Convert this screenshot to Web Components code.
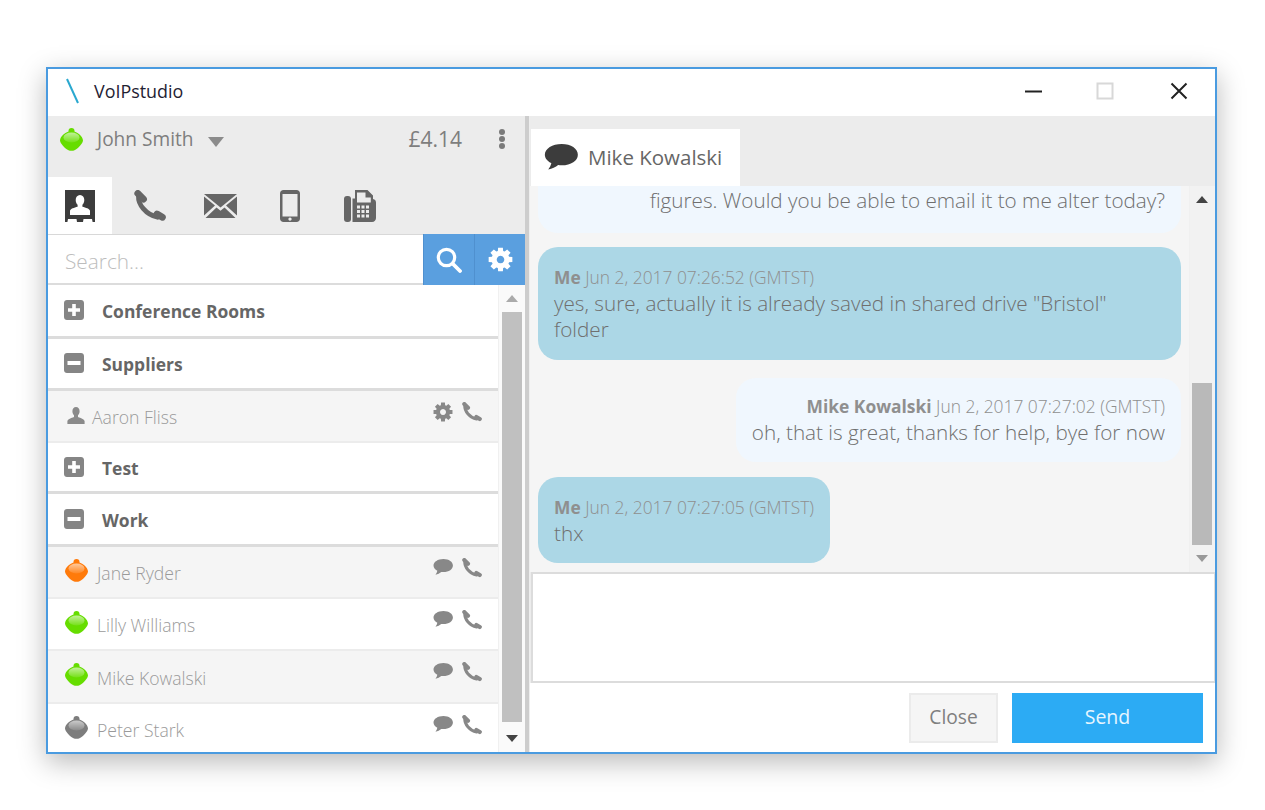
<!DOCTYPE html>
<html>
<head>
<meta charset="utf-8">
<title>VoIPstudio</title>
<style>
  html, body { margin: 0; height: 100%; background: #fff; overflow: hidden; }
  body { font-family: "Open Sans", "Liberation Sans", sans-serif; padding: 67px 48px 56px 46px; box-sizing: border-box; }
</style>
</head>
<body>
<vs-window>
  <vs-titlebar slot="north">VoIPstudio</vs-titlebar>

  <vs-panel slot="west">
    <vs-userbar slot="head" status="#66dd00" balance="£4.14">John Smith</vs-userbar>
    <vs-navtabs slot="head"></vs-navtabs>
    <vs-search slot="head"></vs-search>
    <vs-group slot="list" icon="plus" style="height:54px">Conference Rooms</vs-group>
    <vs-group slot="list" icon="minus" style="height:52px">Suppliers</vs-group>
    <vs-contact slot="list" shade action="gear" style="height:52px">Aaron Fliss</vs-contact>
    <vs-group slot="list" icon="plus" style="height:51px">Test</vs-group>
    <vs-group slot="list" icon="minus" style="height:53px">Work</vs-group>
    <vs-contact slot="list" shade status="#ff7a0a" style="height:52px">Jane Ryder</vs-contact>
    <vs-contact slot="list" status="#66dd00" style="height:52px">Lilly Williams</vs-contact>
    <vs-contact slot="list" shade status="#66dd00" style="height:53px">Mike Kowalski</vs-contact>
    <vs-contact slot="list" status="#7d7d7d" style="height:52px">Peter Stark</vs-contact>
    <vs-scrollbar slot="bar" before="27" thumb="410" track="#fafafa" tone="#c0c0c0" up="#ababab" down="#444"></vs-scrollbar>
  </vs-panel>

  <vs-conversation slot="center" who="Mike Kowalski">
    <vs-bubble slot="messages" mine-side="them" clipped style="margin-bottom:14px;--pb:20px">figures. Would you be able to email it to me alter today?</vs-bubble>
    <vs-bubble slot="messages" mine-side="me" name="Me" stamp="Jun 2, 2017 07:26:52 (GMTST)" style="margin-bottom:18px;--pb:18px">yes, sure, actually it is already saved in shared drive "Bristol" folder</vs-bubble>
    <vs-bubble slot="messages" mine-side="them" name="Mike Kowalski" stamp="Jun 2, 2017 07:27:02 (GMTST)" tight style="margin-bottom:15px">oh, that is great, thanks for help, bye for now</vs-bubble>
    <vs-bubble slot="messages" mine-side="me" name="Me" stamp="Jun 2, 2017 07:27:05 (GMTST)">thx</vs-bubble>
    <vs-scrollbar slot="bar" before="197" thumb="162" track="#f2f2f2" tone="#b9b9b9" up="#444" down="#999"></vs-scrollbar>
  </vs-conversation>
</vs-window>

<script>
// Gear with 8 teeth, generated so the same path works at any icon size.
function gearPath() {
    const pts = [];
    for (let i = 0; i < 8; i++) {
        const a = (i * Math.PI) / 4;
        const at = (r, d) => `${(12 + r * Math.cos(a + d)).toFixed(2)} ${(12 + r * Math.sin(a + d)).toFixed(2)}`;
        pts.push(at(8.6, -0.3), at(11.6, -0.2), at(11.6, 0.2), at(8.6, 0.3));
    }
    return `M${pts.join('L')}Z M12 8.4a3.6 3.6 0 1 0 .01 0Z`;
}

const PHONE = `<g fill="none" stroke="currentColor" stroke-linecap="round">
    <path d="M4.500 6.500C4 14 11.500 24.500 23.500 27.200" stroke-width="4.800"/>
    <path d="M3.800 3.400 9.500 9.200" stroke-width="6.800"/>
    <path d="M23 24 28.400 27.200" stroke-width="6.800"/></g>`;

const ICONS = {
    phone: ['0 0 32 32', PHONE],
    gear: ['0 0 24 24', `<path fill="currentColor" fill-rule="evenodd" d="${gearPath()}"/>`],
    chat: ['0 0 24 20', '<path fill="currentColor" d="M12.500 0C5.900 0 .6 3.600.6 8.200c0 2.700 1.800 5 4.600 6.500-.3 1.600-1 3.300-2.200 4.900 2.600-.5 5.300-1.900 7-3.400.8.1 1.600.2 2.500.2 6.600 0 11.400-3.600 11.400-8.200S19.100 0 12.500 0z"/>'],
    person: ['0 0 18 17', '<path fill="currentColor" d="M9 0c2.200 0 3.600 1.800 3.600 4.200 0 1.700-.7 3.200-1.600 4v1.700c2.800 1 6.200 2 6.600 4.200V17H.4v-2.900c.4-2.200 3.800-3.200 6.600-4.200V8.200c-.9-.8-1.600-2.300-1.600-4C5.400 1.800 6.800 0 9 0z"/>'],
    book: ['0 0 30 32', `<path fill="#3c3c3c" d="M0 0h30v32h-2.400l-.6-3h-8.500l-.5 3h-6l-.5-3H3l-.6 3H0z"/>
        <path fill="#fff" d="M15 5c2.700 0 4.300 2.200 4.300 5 0 2-.8 3.800-1.900 4.800v2c3.400 1 7.200 1.900 7.600 4V25H5v-4.200c.4-2.100 4.200-3 7.600-4v-2c-1.100-1-1.900-2.800-1.900-4.800 0-2.800 1.600-5 4.300-5z"/>`],
    mail: ['0 0 33 24', `<path fill="currentColor" d="M0 0h33L16.500 13.500z"/><path fill="currentColor" d="M0 2.500V21.500L11 11.500zM33 2.500V21.500L22 11.500zM1.500 24H31.500L20.500 13.500 16.500 16.800 12.500 13.500z"/>`],
    mobile: ['0 0 20 32', '<path fill="currentColor" fill-rule="evenodd" d="M3.500 0h13C18.500 0 20 1.500 20 3.500v25c0 2-1.500 3.500-3.500 3.500h-13C1.500 32 0 30.500 0 28.500v-25C0 1.500 1.500 0 3.500 0zM2.500 4v22.500h15V4zM10 27.500a1.600 1.600 0 1 0 .01 0z"/>'],
    fax: ['0 0 32 32', `<rect fill="currentColor" x="0" y="6" width="7" height="26" rx="3"/>
        <path fill="currentColor" fill-rule="evenodd" d="M8.500 8.500H11V0h12.500L29 5.500V9c1.800.3 3 1.500 3 3.500V28c0 2.200-1.500 4-4 4H8.500zM13 2.500V12.500H26.800V7.500H21.500V2.500z"/>
        <g fill="#ececec">${[13, 17.5, 22].map(x => [15.5, 20, 24.5].map(y => `<rect x="${x}" y="${y}" width="3" height="3"/>`).join('')).join('')}</g>`],
    search: ['0 0 26 26', '<g fill="none" stroke="currentColor" stroke-linecap="round"><circle cx="10.500" cy="10.500" r="8.200" stroke-width="3.200"/><path d="M17 17l7 7" stroke-width="3.800"/></g>'],
    plus: ['0 0 20 20', '<path fill="currentColor" fill-rule="evenodd" d="M3 0h14c1.700 0 3 1.300 3 3v14c0 1.700-1.300 3-3 3H3c-1.700 0-3-1.300-3-3V3c0-1.700 1.300-3 3-3zM8.200 4v4.200H4v3.600h4.200V16h3.600v-4.200H16V8.200h-4.200V4z"/>'],
    minus: ['0 0 20 20', '<path fill="currentColor" fill-rule="evenodd" d="M3 0h14c1.700 0 3 1.300 3 3v14c0 1.700-1.300 3-3 3H3c-1.700 0-3-1.300-3-3V3c0-1.700 1.300-3 3-3zM3.500 8v4h13V8z"/>'],
    dots: ['0 0 8 20', '<g fill="currentColor"><circle cx="4" cy="3" r="3"/><circle cx="4" cy="10" r="3"/><circle cx="4" cy="17" r="3"/></g>'],
};

class VsIcon extends HTMLElement {
    connectedCallback() {
        if (this._init) return;
        this._init = true;
        const [box, body] = ICONS[this.getAttribute('name')];
        const w = this.getAttribute('w');
        const h = this.getAttribute('h');
        this.attachShadow({ mode: 'open' }).innerHTML = `
            <style>:host { display: inline-flex; flex: none; width: ${w}px; height: ${h}px; } svg { width: 100%; height: 100%; display: block; }</style>
            <svg viewBox="${box}" preserveAspectRatio="none">${body}</svg>`;
    }
}

// Presence "drop": round body with a small knob on top and a lighter cap.
class VsStatus extends HTMLElement {
    connectedCallback() {
        if (this._init) return;
        this._init = true;
        const c = this.getAttribute('color');
        this.attachShadow({ mode: 'open' }).innerHTML = `
            <style>:host { display: inline-flex; flex: none; width: 23px; height: 23px; } svg { width: 100%; height: 100%; display: block; }</style>
            <svg viewBox="0 0 23 23">
                <defs><linearGradient id="cap" x1="0" y1="0" x2="0" y2="1">
                    <stop offset="0" stop-color="#fff" stop-opacity=".6"/>
                    <stop offset="1" stop-color="#fff" stop-opacity=".1"/>
                </linearGradient></defs>
                <circle fill="${c}" cx="11.500" cy="3" r="3"/>
                <path fill="${c}" d="M11.500 3C17 3 23 8.500 23 12.500 23 15 18 21 14.500 22.300 13 23 10 23 8.500 22.300 5 21 0 15 0 12.500 0 8.500 6 3 11.500 3z"/>
                <ellipse fill="url(#cap)" cx="11.500" cy="9.500" rx="8" ry="5"/>
            </svg>`;
    }
}

class VsWindow extends HTMLElement {
    connectedCallback() {
        if (this._init) return;
        this._init = true;
        this.attachShadow({ mode: 'open' }).innerHTML = `
            <style>
                :host {
                    display: grid; box-sizing: border-box; width: 1171px; height: 687px;
                    grid-template-columns: 477px 5px 1fr; grid-template-rows: 47px 1fr;
                    border: 2px solid #4a9be0; background: #fff;
                    box-shadow: 0 8px 26px rgba(0,0,0,.28);
                }
                .north { grid-column: 1 / -1; }
                .west, .center { min-height: 0; min-width: 0; }
                .split { background: #cdcdcd; border-right: 1px solid #eee; }
            </style>
            <div class="north"><slot name="north"></slot></div>
            <div class="west"><slot name="west"></slot></div>
            <div class="split"></div>
            <div class="center"><slot name="center"></slot></div>`;
    }
}

class VsTitlebar extends HTMLElement {
    connectedCallback() {
        if (this._init) return;
        this._init = true;
        this.attachShadow({ mode: 'open' }).innerHTML = `
            <style>
                :host { display: flex; align-items: center; height: 47px; box-sizing: border-box; padding-bottom: 4px; color: #1f2233; font: 400 17.900px "Open Sans", sans-serif; }
                .logo { width: 16px; height: 26px; margin: 0 14px 0 16px; }
                .title { flex: 1; }
                .ctl { width: 73px; display: flex; justify-content: center; }
                svg { display: block; }
            </style>
            <svg class="logo" viewBox="0 0 16 26"><path d="M3 1l11 24" stroke="#2aa8cf" stroke-width="2" fill="none"/></svg>
            <span class="title"><slot></slot></span>
            <span class="ctl"><svg width="17" height="18" style="margin-left:3px"><path d="M0 9.500h17" stroke="#222" stroke-width="2"/></svg></span>
            <span class="ctl"><svg width="18" height="18"><rect x="1.500" y="1.500" width="15" height="15" fill="none" stroke="#d8d8d8" stroke-width="2"/></svg></span>
            <span class="ctl" style="margin-right:1px"><svg width="18" height="18" style="margin-left:2px"><path d="M1.500 1.500l15 15M16.500 1.500l-15 15" stroke="#222" stroke-width="2"/></svg></span>`;
    }
}

class VsPanel extends HTMLElement {
    connectedCallback() {
        if (this._init) return;
        this._init = true;
        this.attachShadow({ mode: 'open' }).innerHTML = `
            <style>
                :host { display: flex; flex-direction: column; height: 636px; background: #ececec; }
                .body { flex: 1; min-height: 0; display: grid; grid-template-columns: 1fr 27px; background: #fff; }
                .list { overflow: hidden; min-height: 0; display: flex; flex-direction: column; }
            </style>
            <slot name="head"></slot>
            <div class="body">
                <div class="list"><slot name="list"></slot></div>
                <slot name="bar"></slot>
            </div>`;
    }
}

class VsUserbar extends HTMLElement {
    connectedCallback() {
        if (this._init) return;
        this._init = true;
        const s = this.getAttribute('status');
        this.attachShadow({ mode: 'open' }).innerHTML = `
            <style>
                :host { display: flex; align-items: flex-start; height: 61px; padding: 10px 19px 0 12px; box-sizing: border-box; color: #7e7e7e; font: 400 19.100px/26px "Open Sans", sans-serif; }
                vs-status { margin-top: 2px; }
                .name { margin-left: 14px; }
                .caret { width: 0; height: 0; margin: 11px 0 0 15px; border: 8px solid transparent; border-top: 10px solid #8b8b8b; border-bottom: 0; }
                .bal { margin-left: auto; font-size: 21px; }
                vs-icon { margin: 3px 0 0 36px; color: #7a7a7a; }
            </style>
            <vs-status color="${s}"></vs-status>
            <span class="name"><slot></slot></span>
            <span class="caret"></span>
            <span class="bal">${this.getAttribute('balance')}</span>
            <vs-icon name="dots" w="8" h="20"></vs-icon>`;
    }
}

class VsNavtabs extends HTMLElement {
    connectedCallback() {
        if (this._init) return;
        this._init = true;
        const tabs = [['book', 30, 32], ['phone', 32, 32], ['mail', 33, 24], ['mobile', 20, 32], ['fax', 32, 32]];
        this.attachShadow({ mode: 'open' }).innerHTML = `
            <style>
                :host { display: flex; gap: 6px; height: 57px; color: #666; }
                .tab { width: 64px; display: flex; align-items: center; justify-content: center; }
                .tab.on { background: #fff; }
            </style>
            ${tabs.map(([n, w, h], i) => `<div class="tab ${i ? '' : 'on'}"><vs-icon name="${n}" w="${w}" h="${h}"></vs-icon></div>`).join('')}`;
    }
}

class VsSearch extends HTMLElement {
    connectedCallback() {
        if (this._init) return;
        this._init = true;
        this.attachShadow({ mode: 'open' }).innerHTML = `
            <style>
                :host { display: flex; height: 51px; box-sizing: border-box; background: #fff; border-top: 1px solid #d8d8d8; border-bottom: 2px solid #dcdcdc; }
                .field { flex: 1; padding-left: 17px; color: #bdbdbd; font: 300 20.800px/52px "Open Sans", sans-serif; height: 48px; }
                .btn { width: 50px; margin: -1px 0 -2px 0; display: flex; align-items: center; justify-content: center; background: #5a9fdf; color: #fff; border-left: 1px solid #4f90cf; }
            </style>
            <div class="field">Search...</div>
            <div class="btn"><vs-icon name="search" w="26" h="26"></vs-icon></div>
            <div class="btn"><vs-icon name="gear" w="25" h="25"></vs-icon></div>`;
    }
}

class VsGroup extends HTMLElement {
    connectedCallback() {
        if (this._init) return;
        this._init = true;
        this.attachShadow({ mode: 'open' }).innerHTML = `
            <style>
                :host { display: flex; align-items: center; flex: none; box-sizing: border-box; padding: 1px 0 0 16px; background: #fff; border-bottom: 3px solid #dcdcdc; color: #666; font: 700 17.450px "Open Sans", sans-serif; }
                vs-icon { color: #858585; margin-right: 18px; margin-top: -2px; }
            </style>
            <vs-icon name="${this.getAttribute('icon')}" w="20" h="20"></vs-icon>
            <span><slot></slot></span>`;
    }
}

class VsContact extends HTMLElement {
    connectedCallback() {
        if (this._init) return;
        this._init = true;
        const status = this.getAttribute('status');
        const first = this.getAttribute('action') === 'gear'
            ? '<vs-icon name="gear" w="20" h="20"></vs-icon>'
            : '<vs-icon name="chat" w="20" h="16" style="margin-top:1px"></vs-icon>';
        const mark = status
            ? `<vs-status color="${status}"></vs-status>`
            : '<vs-icon class="person" name="person" w="18" h="17"></vs-icon>';
        this.attachShadow({ mode: 'open' }).innerHTML = `
            <style>
                :host { display: flex; align-items: center; flex: none; box-sizing: border-box; position: relative; padding: 2px 0 0 17px; background: ${this.hasAttribute('shade') ? '#f5f5f5' : '#fff'}; border-bottom: 2px solid #ececec; color: #9a9a9a; font: 300 17.600px "Open Sans", sans-serif; }
                vs-status { margin-right: 9px; margin-top: -6px; }
                .person { color: #8a8a8a; margin: -3px 7px 0 2px; }
                .acts { position: absolute; right: 16px; top: 11px; display: flex; align-items: flex-start; gap: 9px; color: #888; }
            </style>
            ${mark}
            <span><slot></slot></span>
            <div class="acts">${first}<vs-icon name="phone" w="20" h="20"></vs-icon></div>`;
    }
}

class VsScrollbar extends HTMLElement {
    connectedCallback() {
        if (this._init) return;
        this._init = true;
        const a = (n) => this.getAttribute(n);
        this.attachShadow({ mode: 'open' }).innerHTML = `
            <style>
                :host { display: flex; flex-direction: column; align-items: center; box-sizing: border-box; height: 100%; background: ${a('track')}; box-shadow: inset 1px 0 #f0f0f0; }
                .before { height: ${a('before')}px; width: 100%; display: flex; justify-content: center; align-items: flex-start; flex: none; }
                .up { width: 0; height: 0; margin-top: 10px; border: 6px solid transparent; border-bottom: 7px solid ${a('up')}; border-top: 0; }
                .thumb { width: 20px; height: ${a('thumb')}px; background: ${a('tone')}; flex: none; }
                .down { width: 0; height: 0; margin-top: auto; margin-bottom: 10px; border: 6px solid transparent; border-top: 7px solid ${a('down')}; border-bottom: 0; }
            </style>
            <div class="before"><div class="up"></div></div>
            <div class="thumb"></div>
            <div class="down"></div>`;
    }
}

class VsConversation extends HTMLElement {
    connectedCallback() {
        if (this._init) return;
        this._init = true;
        this.attachShadow({ mode: 'open' }).innerHTML = `
            <style>
                :host { display: flex; flex-direction: column; height: 636px; background: #ececec; font-family: "Open Sans", sans-serif; }
                .tabs { height: 70px; flex: none; padding-left: 1px; display: flex; align-items: flex-end; box-sizing: border-box; }
                .tab { display: flex; align-items: center; width: 209px; height: 57px; box-sizing: border-box; padding: 0 0 1px 13px; background: #fff; color: #666; font-size: 20.500px; }
                .tab vs-icon { color: #3c3c3c; margin-right: 10px; }
                .log { height: 386px; flex: none; display: grid; grid-template-columns: 1fr 26px; background: #f5f5f5; overflow: hidden; }
                .msgs { padding: 0 8px 0 8px; display: flex; flex-direction: column; align-items: flex-start; min-width: 0; }
                .input { flex: none; height: 111px; box-sizing: border-box; background: #fff; border: 2px solid #dcdcdc; border-right-width: 1px; margin-left: 1px; }
                .foot { flex: 1; background: #fff; display: flex; justify-content: flex-end; gap: 14px; padding: 10px 12px 0 0; }
                .btn { height: 50px; box-sizing: border-box; padding-bottom: 3px; display: flex; align-items: center; justify-content: center; }
                .close { width: 89px; background: #f5f5f5; border: 2px solid #ebebeb; color: #7f7f7f; font-size: 19.200px; }
                .send { width: 191px; background: #2cabf4; color: #e6f5ff; font-size: 19.500px; }
            </style>
            <div class="tabs"><div class="tab"><vs-icon name="chat" w="34" h="26"></vs-icon>${this.getAttribute('who')}</div></div>
            <div class="log">
                <div class="msgs"><slot name="messages"></slot></div>
                <slot name="bar"></slot>
            </div>
            <div class="input"></div>
            <div class="foot"><div class="btn close">Close</div><div class="btn send">Send</div></div>`;
    }
}

class VsBubble extends HTMLElement {
    connectedCallback() {
        if (this._init) return;
        this._init = true;
        const me = this.getAttribute('mine-side') === 'me';
        const name = this.getAttribute('name');
        const clipped = this.hasAttribute('clipped');
        const wide = clipped || this.textContent.length > 60;
        const meta = name ? `<div class="meta"><b>${name}</b> ${this.getAttribute('stamp')}</div>` : '';
        const top = clipped ? 1 : this.hasAttribute('tight') ? 15 : 17;
        this.attachShadow({ mode: 'open' }).innerHTML = `
            <style>
                :host {
                    display: block; box-sizing: border-box; flex: none;
                    ${wide ? 'width: 643px;' : ''} ${me ? '' : 'margin-left: auto;'}
                    padding: ${top}px 16px var(--pb, 17px);
                    background: ${me ? '#acd7e6' : '#f0f7fe'};
                    border-radius: ${clipped ? '0 0 20px 20px' : '20px'};
                    text-align: ${me ? 'left' : 'right'};
                    color: #6f6f6f; font: 300 20.700px/26px "Open Sans", sans-serif;
                }
                .meta { color: #8f8f8f; font-size: 17.400px; }
                .meta b { font-weight: 700; }
            </style>
            ${meta}<slot></slot>`;
    }
}

customElements.define('vs-icon', VsIcon);
customElements.define('vs-status', VsStatus);
customElements.define('vs-window', VsWindow);
customElements.define('vs-titlebar', VsTitlebar);
customElements.define('vs-panel', VsPanel);
customElements.define('vs-userbar', VsUserbar);
customElements.define('vs-navtabs', VsNavtabs);
customElements.define('vs-search', VsSearch);
customElements.define('vs-group', VsGroup);
customElements.define('vs-contact', VsContact);
customElements.define('vs-scrollbar', VsScrollbar);
customElements.define('vs-conversation', VsConversation);
customElements.define('vs-bubble', VsBubble);
</script>
</body>
</html>
